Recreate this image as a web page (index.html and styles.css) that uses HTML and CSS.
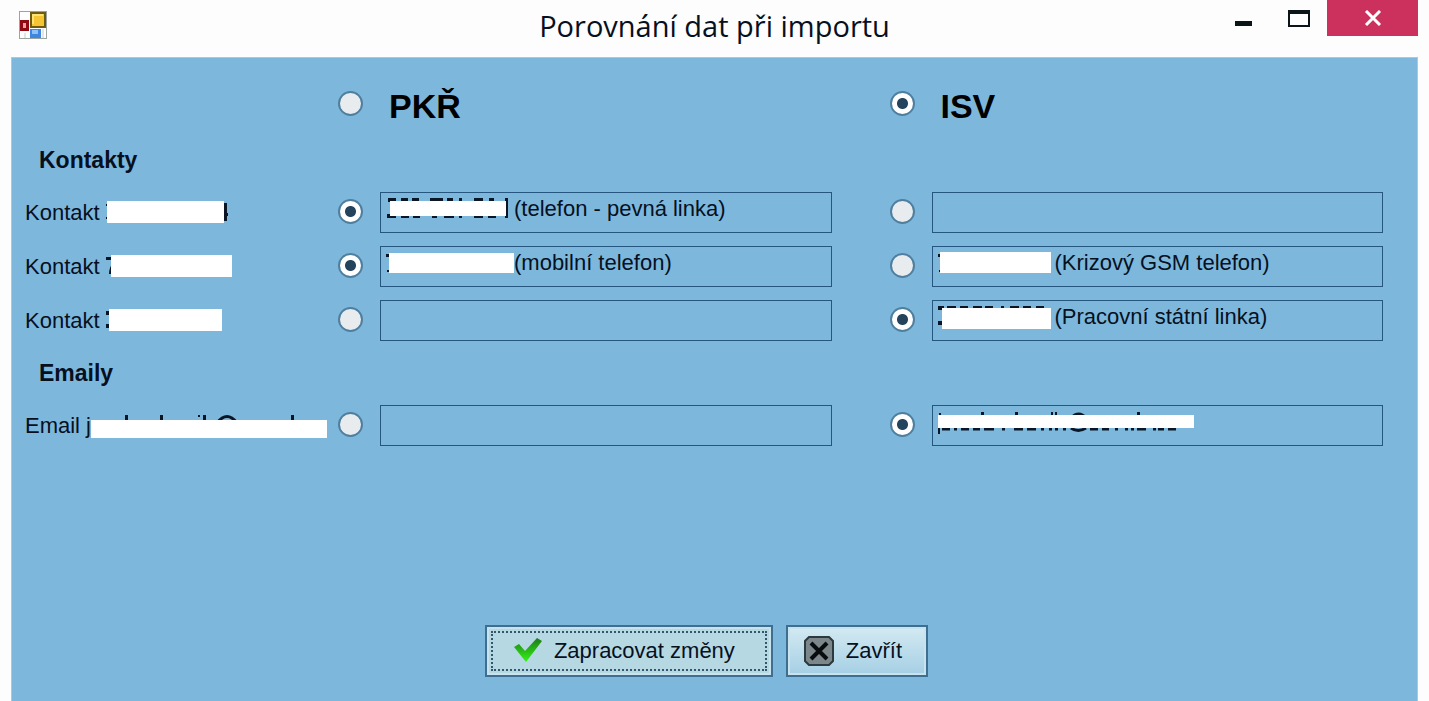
FILE: index.html
```html
<!DOCTYPE html>
<html lang="cs">
<head>
    <meta charset="UTF-8">
    <meta name="viewport" content="width=device-width, initial-scale=1.0">
    <title>Porovnání dat při importu</title>
    <link rel="stylesheet" href="styles.css">
</head>
<body>
    <div class="window">
        <header class="titlebar">
            <svg class="app-icon" width="28" height="28" viewBox="0 0 28 28" aria-hidden="true">
                <rect x="0.5" y="0.5" width="27" height="27" fill="#fff" stroke="#9aa5a0"/>
                <path d="M6 22v5M24 18v9" stroke="#c4cdc6"/>
                <rect x="1" y="9" width="9" height="11" fill="#8f0a12"/>
                <rect x="4" y="12" width="3" height="5" fill="#f3a0a0"/>
                <rect x="12" y="2" width="14" height="14" fill="#f6c534" stroke="#6e5a10" stroke-width="2"/>
                <path d="M14 13V4h10" fill="none" stroke="#fbe276" stroke-width="2"/>
                <rect x="11" y="18" width="11" height="9" fill="#3f86e0"/>
                <rect x="13" y="19" width="6" height="4" fill="#8cc1fa"/>
            </svg>
            <h1>Porovnání dat při importu</h1>
            <div class="window-controls">
                <button type="button" aria-label="Minimalizovat">
                    <svg width="17" height="5" viewBox="0 0 17 5"><rect width="17" height="5" fill="#0b1416"/></svg>
                </button>
                <button type="button" aria-label="Maximalizovat">
                    <svg width="22" height="17" viewBox="0 0 22 17"><path d="M1 1h20v15H1z" fill="none" stroke="#0b1416" stroke-width="2"/><rect width="22" height="4" fill="#0b1416"/></svg>
                </button>
                <button type="button" class="close" aria-label="Zavřít okno">
                    <svg width="18" height="16" viewBox="0 0 18 16"><path d="M2 1l14 14M16 1L2 15" stroke="#fff" stroke-width="3"/></svg>
                </button>
            </div>
        </header>

        <form class="panel">
            <div class="row">
                <span></span>
                <label class="choice source"><input type="radio" name="source"><span>PKŘ</span></label>
                <label class="choice source"><input type="radio" name="source" checked><span>ISV</span></label>
            </div>

            <h2>Kontakty</h2>

            <div class="row">
                <div class="name">
                    <span>Kontakt&nbsp;</span>
                    <svg width="124" height="24" viewBox="0 0 124 24" aria-hidden="true">
                        <path d="M0 3h2v2H0zM0 16h2v2H0zM116 2h5v18h-3v-4h-2zM118 12h4v3h-4z" fill="#0a1626"/>
                        <rect x="1" y="0" width="117" height="22" fill="#fff"/>
                    </svg>
                </div>
                <label class="choice">
                    <input type="radio" name="contact1" aria-label="PKŘ" checked>
                    <span class="value">
                        <svg width="128" height="24" viewBox="0 0 128 24" aria-hidden="true">
                            <path d="M2 3h8M15 3h7M26 3h7M44 3h13M61 3h6M73 3h3M88 3h9M103 3h5M119 3h3M1 19h9M15 19h8M27 19h7M46 19h5M58 19h10M73 19h3M88 19h9M102 19h8M119 19h3" stroke="#0a1626" stroke-width="4"/>
                            <path d="M119 4h3v15h-3z" fill="#0a1626"/>
                            <rect x="4" y="4" width="116" height="15" fill="#fff"/>
                        </svg>(telefon - pevná linka)
                    </span>
                </label>
                <label class="choice"><input type="radio" name="contact1" aria-label="ISV"><span class="value"></span></label>
            </div>

            <div class="row">
                <div class="name">
                    <span>Kontakt&nbsp;</span>
                    <svg width="126" height="24" viewBox="0 0 126 24" aria-hidden="true">
                        <path d="M0 2h7v3H0zM3 19q0-6 4-12v12z" fill="#0a1626"/>
                        <rect x="5" y="0" width="121" height="22" fill="#fff"/>
                    </svg>
                </div>
                <label class="choice">
                    <input type="radio" name="contact2" aria-label="PKŘ" checked>
                    <span class="value">
                        <svg width="128" height="24" viewBox="0 0 128 24" aria-hidden="true">
                            <path d="M0 3h4v3H0zM1 19h2v2H1z" fill="#0a1626"/>
                            <rect x="3" y="2" width="125" height="20" fill="#fff"/>
                        </svg>(mobilní telefon)
                    </span>
                </label>
                <label class="choice">
                    <input type="radio" name="contact2" aria-label="ISV">
                    <span class="value">
                        <svg width="117" height="24" viewBox="0 0 117 24" aria-hidden="true">
                            <path d="M0 3h4v3H0zM1 19h2v2H1z" fill="#0a1626"/>
                            <rect x="2" y="1" width="111" height="21" fill="#fff"/>
                        </svg>(Krizový GSM telefon)
                    </span>
                </label>
            </div>

            <div class="row">
                <div class="name">
                    <span>Kontakt&nbsp;</span>
                    <svg width="116" height="24" viewBox="0 0 116 24" aria-hidden="true">
                        <path d="M0 2h4v4H0zM0 15h4v4H0z" fill="#0a1626"/>
                        <rect x="3" y="0" width="113" height="22" fill="#fff"/>
                    </svg>
                </div>
                <label class="choice"><input type="radio" name="contact3" aria-label="PKŘ"><span class="value"></span></label>
                <label class="choice">
                    <input type="radio" name="contact3" aria-label="ISV" checked>
                    <span class="value">
                        <svg width="117" height="24" viewBox="0 0 117 24" aria-hidden="true">
                            <path d="M0 3h6M9 3h9M22 3h8M35 3h9M47 3h8M63 3h3M72 3h9M85 3h8M98 3h8M0 18h6" stroke="#0a1626" stroke-width="4"/>
                            <rect x="4" y="3" width="109" height="21" fill="#fff"/>
                        </svg>(Pracovní státní linka)
                    </span>
                </label>
            </div>

            <h2>Emaily</h2>

            <div class="row">
                <div class="name">
                    <span>Email j</span>
                    <svg width="236" height="24" viewBox="0 0 236 24" aria-hidden="true">
                        <path d="M34 1h3v7h-3zM69 1h3v7h-3zM107 1h2v2h-2zM112 1h3v7h-3zM200 1h3v7h-3z" fill="#0a1626"/>
                        <path d="M126 9q10-13 20 0" fill="none" stroke="#0a1626" stroke-width="3"/>
                        <rect y="6" width="236" height="18" fill="#fff"/>
                    </svg>
                </div>
                <label class="choice"><input type="radio" name="email1" aria-label="PKŘ"><span class="value"></span></label>
                <label class="choice">
                    <input type="radio" name="email1" aria-label="ISV" checked>
                    <span class="value">
                        <svg width="256" height="24" viewBox="0 0 256 24" aria-hidden="true">
                            <path d="M1 3h2v2H1zM43 2h3v6h-3zM77 2h3v6h-3zM113 2h2v6h-2zM117 2h2v6h-2zM199 2h3v6h-3zM0 18h2v6H0z" fill="#0a1626"/>
                            <path d="M133 8q8-8 15 0M133 18q7 5 15 0" fill="none" stroke="#0a1626" stroke-width="3"/>
                            <path d="M4 19h8M16 19h3M23 19h8M35 19h7M46 19h10M64 19h3M76 19h9M89 19h9M103 19h3M111 19h3M117 19h3M125 19h3M152 19h8M164 19h7M177 19h3M187 19h3M193 19h3M199 19h9M215 19h3M220 19h6M230 19h8" stroke="#0a1626" stroke-width="3"/>
                            <rect y="5" width="256" height="13" fill="#fff"/>
                        </svg>
                    </span>
                </label>
            </div>

            <div class="actions">
                <button type="submit" class="button primary">
                    <svg width="28" height="26" viewBox="0 0 28 26" aria-hidden="true">
                        <defs>
                            <linearGradient id="tick" x1="0" y1="0" x2="0" y2="1">
                                <stop offset="0" stop-color="#1c7a16"/>
                                <stop offset="1" stop-color="#35f516"/>
                            </linearGradient>
                        </defs>
                        <path d="M0 9l5-3 6 7L23 0l5 3-16 21z" fill="url(#tick)"/>
                    </svg>
                    Zapracovat změny
                </button>
                <button type="button" class="button">
                    <svg width="30" height="30" viewBox="0 0 30 30" aria-hidden="true">
                        <path d="M5 1h20l4 4v20l-4 4H5l-4-4V5z" fill="#7b878a" stroke="#2c3a3f" stroke-width="2"/>
                        <path d="M7 7l16 16M23 7L7 23" stroke="#080c0e" stroke-width="4"/>
                    </svg>
                    Zavřít
                </button>
            </div>
        </form>
    </div>
</body>
</html>
```
FILE: styles.css
```css
:root {
    --panel-color: #7db8dc;
    --line-color: #255680;
    --text-color: #06101f;
}

* {
    box-sizing: border-box;
    margin: 0;
    padding: 0;
}

body {
    font-family: "Liberation Sans", Arial, sans-serif;
    font-size: 22px;
    line-height: 24px;
    color: var(--text-color);
    background-color: #fdfdfd;
}

.window {
    display: flex;
    flex-direction: column;
    min-height: 100vh;
    padding: 0 11px;
}

.titlebar {
    display: grid;
    grid-template-columns: 1fr auto 1fr;
    align-items: start;
    height: 57px;
}

.app-icon {
    margin: 11px 8px;
}

h1 {
    font-family: "Open Sans", "Noto Sans", sans-serif;
    font-size: 29px;
    font-weight: 400;
    line-height: 52px;
}

.window-controls {
    display: flex;
    justify-content: flex-end;
}

.window-controls button {
    display: flex;
    align-items: center;
    justify-content: center;
    width: 56px;
    height: 36px;
    border: none;
    background: none;
}

.window-controls button:first-child svg {
    margin-top: 10px;
}

.window-controls .close {
    width: 91px;
    background-color: #cb315c;
}

.panel {
    flex: 1;
    display: flex;
    flex-direction: column;
    gap: 13px;
    padding: 26px 34px 24px 13px;
    border: 1px solid #a9cbd6;
    border-bottom: none;
    background-color: var(--panel-color);
}

.row {
    display: grid;
    grid-template-columns: 255px 1fr 1fr;
    column-gap: 58px;
    min-height: 41px;
}

h2 {
    padding-left: 14px;
    font-size: 23px;
    line-height: 38px;
}

.name {
    display: flex;
    align-items: center;
    white-space: nowrap;
}

.name svg {
    flex: none;
}

.choice {
    display: flex;
    gap: 17px;
    min-width: 0;
}

.choice input {
    appearance: none;
    flex: none;
    width: 25px;
    height: 25px;
    margin-top: 7px;
    border: 2px solid #4f7f9f;
    border-radius: 50%;
    background: #e9ecee;
}

.choice input:checked {
    background: radial-gradient(circle, #24435c 5px, #fff 6px);
}

.source {
    font-size: 34px;
    font-weight: 700;
    line-height: 44px;
    color: #000;
}

.source span {
    padding-left: 9px;
}

.value {
    flex: 1;
    display: flex;
    align-items: flex-start;
    padding: 4px 5px;
    border: 1px solid var(--line-color);
    white-space: nowrap;
}

.actions {
    display: flex;
    justify-content: center;
    gap: 13px;
    margin-top: 166px;
    padding-left: 5px;
}

.button {
    display: flex;
    align-items: center;
    gap: 12px;
    height: 52px;
    padding: 0 24px 0 16px;
    border: 2px solid #3f6f90;
    background: linear-gradient(#d3eaf2, #a5cfe4);
    box-shadow: inset 0 0 0 2px #c8e3ee;
    font: inherit;
    color: inherit;
}

.button.primary {
    padding: 0 36px 0 27px;
    background: #b5d8e3;
    outline: 2px dotted #35566a;
    outline-offset: -8px;
}
```
